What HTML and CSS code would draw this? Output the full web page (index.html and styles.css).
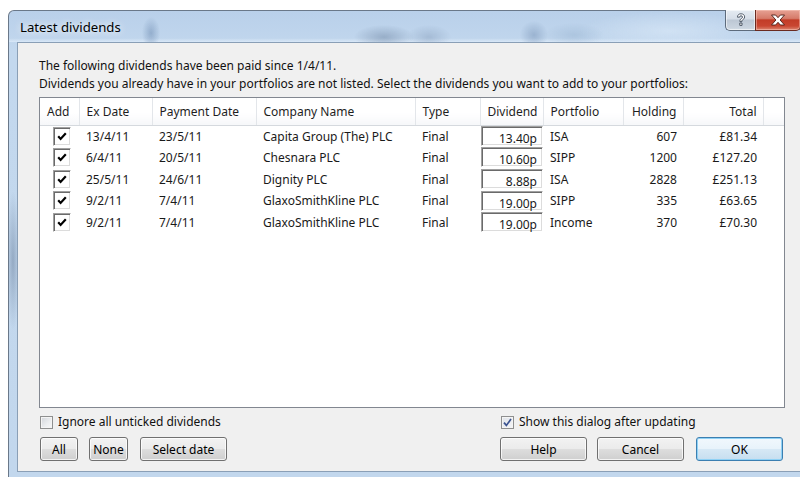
FILE: index.html
```html
<!DOCTYPE html>
<html lang="en">
<head>
<meta charset="utf-8">
<title>Latest dividends</title>
<link rel="stylesheet" href="styles.css">
</head>
<body>
<div class="window">
  <div class="titlebar">
    <span class="title">Latest dividends</span>
    <div class="caption-buttons">
      <div class="cap-btn help">
        <svg width="10" height="14" viewBox="0 0 10 14">
          <path d="M1.5 4.2 C1.5 1.6 3.2 0.8 5 0.8 C7.2 0.8 8.6 2 8.6 3.9 C8.6 5.6 7.4 6.3 6.5 6.9 C6 7.3 5.9 7.6 5.9 8.6 L3.9 8.6 C3.9 7 4.2 6.3 5.3 5.6 C6.2 5 6.5 4.7 6.5 4 C6.5 3.2 5.9 2.8 5 2.8 C4.1 2.8 3.6 3.3 3.6 4.2 Z M3.8 10 L6 10 L6 12.4 L3.8 12.4 Z" fill="#fff" stroke="#3f4b5a" stroke-width="0.9" stroke-linejoin="round"/>
        </svg>
      </div>
      <div class="cap-btn close">
        <svg width="16" height="12" viewBox="0 0 16 12">
          <path d="M1.5 1 L5.6 1 L8 3.7 L10.4 1 L14.5 1 L10.1 6 L14.5 11 L10.4 11 L8 8.3 L5.6 11 L1.5 11 L5.9 6 Z" fill="#fff" stroke="#4b1c14" stroke-width="0.9" stroke-linejoin="round"/>
        </svg>
      </div>
    </div>
  </div>

  <div class="client">
    <div class="content">
      <p class="intro">The following dividends have been paid since 1/4/11.<br>Dividends you already have in your portfolios are not listed. Select the dividends you want to add to your portfolios:</p>

      <div class="listview">
        <table class="grid">
          <colgroup>
            <col class="c-add"><col class="c-ex"><col class="c-pay"><col class="c-co"><col class="c-type">
            <col class="c-div"><col class="c-port"><col class="c-hold"><col class="c-total"><col class="c-fill">
          </colgroup>
          <thead>
            <tr>
              <th>Add</th><th>Ex Date</th><th>Payment Date</th><th>Company Name</th><th>Type</th>
              <th>Dividend</th><th>Portfolio</th><th class="num">Holding</th><th class="num">Total</th><th class="fill"></th>
            </tr>
          </thead>
          <tbody>
            <tr>
              <td class="tick"><span class="cellbox"><svg width="10" height="9" viewBox="0 0 10 9"><polyline points="1.2,4.3 3.6,6.9 8.8,1.2" fill="none" stroke="#000" stroke-width="2.2"/></svg></span></td>
              <td>13/4/11</td><td>23/5/11</td><td>Capita Group (The) PLC</td><td>Final</td>
              <td class="amt"><span class="edit">13.40p</span></td><td>ISA</td><td class="num">607</td><td class="num">£81.34</td><td></td>
            </tr>
            <tr>
              <td class="tick"><span class="cellbox"><svg width="10" height="9" viewBox="0 0 10 9"><polyline points="1.2,4.3 3.6,6.9 8.8,1.2" fill="none" stroke="#000" stroke-width="2.2"/></svg></span></td>
              <td>6/4/11</td><td>20/5/11</td><td>Chesnara PLC</td><td>Final</td>
              <td class="amt"><span class="edit">10.60p</span></td><td>SIPP</td><td class="num">1200</td><td class="num">£127.20</td><td></td>
            </tr>
            <tr>
              <td class="tick"><span class="cellbox"><svg width="10" height="9" viewBox="0 0 10 9"><polyline points="1.2,4.3 3.6,6.9 8.8,1.2" fill="none" stroke="#000" stroke-width="2.2"/></svg></span></td>
              <td>25/5/11</td><td>24/6/11</td><td>Dignity PLC</td><td>Final</td>
              <td class="amt"><span class="edit">8.88p</span></td><td>ISA</td><td class="num">2828</td><td class="num">£251.13</td><td></td>
            </tr>
            <tr>
              <td class="tick"><span class="cellbox"><svg width="10" height="9" viewBox="0 0 10 9"><polyline points="1.2,4.3 3.6,6.9 8.8,1.2" fill="none" stroke="#000" stroke-width="2.2"/></svg></span></td>
              <td>9/2/11</td><td>7/4/11</td><td>GlaxoSmithKline PLC</td><td>Final</td>
              <td class="amt"><span class="edit">19.00p</span></td><td>SIPP</td><td class="num">335</td><td class="num">£63.65</td><td></td>
            </tr>
            <tr>
              <td class="tick"><span class="cellbox"><svg width="10" height="9" viewBox="0 0 10 9"><polyline points="1.2,4.3 3.6,6.9 8.8,1.2" fill="none" stroke="#000" stroke-width="2.2"/></svg></span></td>
              <td>9/2/11</td><td>7/4/11</td><td>GlaxoSmithKline PLC</td><td>Final</td>
              <td class="amt"><span class="edit">19.00p</span></td><td>Income</td><td class="num">370</td><td class="num">£70.30</td><td></td>
            </tr>
          </tbody>
        </table>
      </div>

      <div class="footer">
        <div class="group group-left">
          <label class="check"><span class="box"></span>Ignore all unticked dividends</label>
          <div class="buttons">
            <button class="btn btn-all">All</button>
            <button class="btn btn-none">None</button>
            <button class="btn btn-date">Select date</button>
          </div>
        </div>
        <div class="group group-right">
          <label class="check"><span class="box checked"><svg width="9" height="9" viewBox="0 0 9 9"><polyline points="1,4.6 3.4,7.4 8,1" fill="none" stroke="#3b5390" stroke-width="1.7"/></svg></span>Show this dialog after updating</label>
          <div class="buttons">
            <button class="btn btn-wide">Help</button>
            <button class="btn btn-wide">Cancel</button>
            <button class="btn btn-wide btn-default">OK</button>
          </div>
        </div>
      </div>
    </div>
  </div>
</div>
</body>
</html>
```

FILE: styles.css
```css
* { box-sizing: border-box; }

html, body {
  margin: 0;
  padding: 0;
  background: #ffffff;
  overflow: hidden;
}

body {
  width: 800px;
  height: 477px;
  font-family: "Noto Sans", "Open Sans", sans-serif;
  font-size: 12px;
  color: #000;
}

/* ---------- window frame (Aero glass) ---------- */
.window {
  margin: 10px 0 0 8px;
  width: 800px;
  height: 467px;
  display: flex;
  flex-direction: column;
  border: 1px solid #6a7889;
  border-bottom: 0;
  border-radius: 6px 6px 0 0;
  background:
    radial-gradient(ellipse 7px 70px at 4px 250px, rgba(110, 132, 160, 0.55), rgba(110, 132, 160, 0) 100%),
    linear-gradient(to bottom, #b9d0ea 0, #c3d8ee 40px, #c2d7ed 100%);
}

.titlebar {
  height: 31px;
  display: flex;
  align-items: flex-start;
  background:
    radial-gradient(ellipse 9px 16px at 142px 22px, rgba(130, 158, 192, 0.7), rgba(130, 158, 192, 0)),
    radial-gradient(ellipse 30px 12px at 375px 26px, rgba(125, 148, 176, 0.6), rgba(125, 148, 176, 0)),
    radial-gradient(ellipse 22px 12px at 420px 26px, rgba(140, 163, 192, 0.5), rgba(140, 163, 192, 0)),
    radial-gradient(ellipse 14px 14px at 525px 24px, rgba(125, 152, 186, 0.55), rgba(125, 152, 186, 0)),
    radial-gradient(ellipse 30px 12px at 565px 24px, rgba(155, 182, 210, 0.5), rgba(155, 182, 210, 0)),
    radial-gradient(ellipse 90px 20px at 660px 20px, rgba(220, 234, 248, 0.6), rgba(220, 234, 248, 0)),
    linear-gradient(to bottom, rgba(255, 255, 255, 0) 0, rgba(255, 255, 255, 0) 27px, rgba(222, 235, 249, 0.8) 31px);
  border-radius: 6px 6px 0 0;
}

.title {
  margin: 8px 0 0 11px;
  font-size: 13.2px;
  line-height: 16px;
  color: #000;
  text-shadow: 0 0 6px rgba(255, 255, 255, 0.85), 0 0 10px rgba(255, 255, 255, 0.6);
}

.caption-buttons {
  margin-left: auto;
  margin-right: 6px;
  margin-top: -1px;
  display: flex;
}

.cap-btn {
  height: 21px;
  display: flex;
  align-items: center;
  justify-content: center;
  border: 1px solid #5d6b7c;
  border-top: 0;
}

.help {
  width: 30px;
  border-right: 0;
  border-radius: 0 0 0 5px;
  background: linear-gradient(to bottom, #e5ebf2 0, #d6dee8 45%, #bcc7d4 50%, #cad4df 90%, #d8e1ea 100%);
  box-shadow: inset 0 0 0 1px rgba(255, 255, 255, 0.55);
}

.close {
  width: 46px;
  border-radius: 0 0 5px 0;
  border-color: #6a2a20;
  background: linear-gradient(to bottom, #e6a193 0, #d67b6a 42%, #c23c27 50%, #c94631 80%, #dc8670 100%);
  box-shadow: inset 0 0 0 1px rgba(255, 210, 200, 0.45);
}

/* ---------- client area ---------- */
.client {
  flex: 1;
  margin: 0 0 5px 8px;
  border: 1px solid #8a9fb6;
  background: #f0f0f0;
  padding: 14px 0 0 21px;
}

.content {
  width: 746px;
}

.intro {
  margin: 0;
  line-height: 18px;
  color: #111;
}

/* ---------- list view ---------- */
.listview {
  margin-top: 4px;
  height: 311px;
  border: 1px solid #828790;
  background: #fff;
}

.grid {
  width: 744px;
  border-collapse: collapse;
  table-layout: fixed;
}

.c-add { width: 39px; }
.c-ex { width: 73px; }
.c-pay { width: 104px; }
.c-co { width: 159px; }
.c-type { width: 65px; }
.c-div { width: 63px; }
.c-port { width: 80px; }
.c-hold { width: 60px; }
.c-total { width: 80px; }
.c-fill { width: 21px; }

.grid th {
  height: 27px;
  padding: 0 0 0 7px;
  text-align: left;
  font-weight: normal;
  white-space: nowrap;
  background: linear-gradient(to bottom, #ffffff 0, #ffffff 55%, #f6f7f9 100%);
  border-right: 1px solid #e3e6ea;
  border-bottom: 1px solid #d5d9de;
  color: #1e1e1e;
}

.grid th.fill {
  border-right: 0;
}

.grid td {
  height: 21.67px;
  padding: 0 0 0 7px;
  white-space: nowrap;
  color: #1a1a1a;
  vertical-align: middle;
}

.grid th.num,
.grid td.num {
  text-align: right;
  padding: 0 6px 0 0;
}

.grid td.tick {
  padding: 0 0 0 13px;
}

.cellbox {
  display: flex;
  align-items: center;
  justify-content: center;
  width: 18px;
  height: 19px;
  background: #fff;
  border-top: 1px solid #a0a0a0;
  border-left: 1px solid #a0a0a0;
  border-right: 1px solid #ffffff;
  border-bottom: 1px solid #ffffff;
  box-shadow: inset 1px 1px 0 #6a6a6a, inset -1px -1px 0 #dcdcdc;
}

.grid td.amt {
  padding: 0 0 0 1px;
}

.edit {
  display: block;
  width: 62px;
  height: 20px;
  padding: 3px 5px 0 0;
  text-align: right;
  line-height: 17px;
  background: #fff;
  border-top: 1px solid #a0a0a0;
  border-left: 1px solid #a0a0a0;
  border-right: 1px solid #ffffff;
  border-bottom: 1px solid #ffffff;
  box-shadow: inset 1px 1px 0 #6a6a6a, inset -1px -1px 0 #dcdcdc;
}

/* ---------- footer controls ---------- */
.footer {
  display: flex;
  justify-content: space-between;
  margin-top: 6px;
  padding: 0 2px 0 1px;
}

.group {
  display: flex;
  flex-direction: column;
}

.group-right .check {
  margin-left: 1px;
}

.check {
  display: flex;
  align-items: center;
  height: 16px;
  line-height: 16px;
  color: #111;
}

.box {
  display: flex;
  align-items: center;
  justify-content: center;
  width: 13px;
  height: 13px;
  margin-right: 5px;
  border: 1px solid #8e8f8f;
  background: linear-gradient(135deg, #d2d5da 0, #eceef0 60%, #f8f8f8 100%);
  box-shadow: inset 0 0 0 1px #f4f4f4;
}

.box.checked {
  background: linear-gradient(135deg, #dfe3ea 0, #f4f5f7 100%);
}

.buttons {
  display: flex;
  margin-top: 7px;
}

.btn {
  height: 24px;
  padding: 0;
  font-family: inherit;
  font-size: 12px;
  color: #000;
  border: 1px solid #707070;
  border-radius: 3px;
  background: linear-gradient(to bottom, #f2f2f2 0, #ebebeb 48%, #dddddd 52%, #cfcfcf 100%);
  box-shadow: inset 0 0 0 1px rgba(255, 255, 255, 0.75);
}

.btn-all { width: 38px; }
.btn-none { width: 39px; margin-left: 11px; }
.btn-date { width: 87px; margin-left: 12px; }

.btn-wide { width: 87px; }
.btn-wide + .btn-wide { margin-left: 10px; }
.btn-wide.btn-default { margin-left: 12px; }

.btn-default {
  border-color: #3c7fb1;
  background: linear-gradient(to bottom, #f1f8fd 0, #e8f3fb 48%, #d6e8f5 52%, #c6def0 100%);
  box-shadow: inset 0 0 0 1px #8fd1f5;
}
```
